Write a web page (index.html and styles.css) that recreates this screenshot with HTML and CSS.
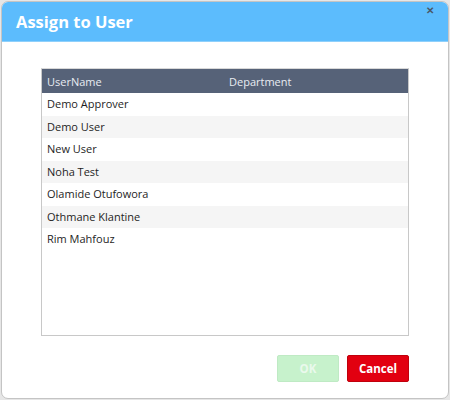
FILE: index.html
```html
<!DOCTYPE html>
<html>
<head>
<meta charset="utf-8">
<link rel="stylesheet" href="styles.css">
</head>
<body>
<div class="dialog">
  <div class="header">
    <span class="title">Assign to User</span>
    <span class="close">&#x2715;</span>
  </div>
  <div class="body">
    <div class="table">
      <div class="thead">
        <div class="c1">UserName</div>
        <div class="c2">Department</div>
      </div>
      <div class="row"><div class="c1">Demo Approver</div><div class="c2"></div></div>
      <div class="row alt"><div class="c1">Demo User</div><div class="c2"></div></div>
      <div class="row"><div class="c1">New User</div><div class="c2"></div></div>
      <div class="row alt"><div class="c1">Noha Test</div><div class="c2"></div></div>
      <div class="row"><div class="c1">Olamide Otufowora</div><div class="c2"></div></div>
      <div class="row alt"><div class="c1">Othmane Klantine</div><div class="c2"></div></div>
      <div class="row"><div class="c1">Rim Mahfouz</div><div class="c2"></div></div>
    </div>
    <div class="actions">
      <button class="btn ok">OK</button>
      <button class="btn cancel">Cancel</button>
    </div>
  </div>
</div>
</body>
</html>
```
FILE: styles.css
```css
html, body {
  margin: 0;
  padding: 0;
  background: #e6e6e6;
  width: 450px;
  height: 400px;
  overflow: hidden;
  font-family: "Open Sans", "Noto Sans", sans-serif;
}
.dialog {
  box-sizing: border-box;
  margin: 1px 1px 0 1px;
  width: 448px;
  height: 398px;
  background: #fff;
  border: 1px solid #c4c4c4;
  border-radius: 7px;
  overflow: hidden;
  display: flex;
  flex-direction: column;
}
.header {
  height: 39px;
  background: #5cbcfd;
  position: relative;
  display: flex;
  align-items: center;
  padding-left: 14px;
  border-bottom: 1px solid #8fd0fb;
}
.title {
  color: #fff;
  font-weight: 700;
  font-size: 16.5px;
  letter-spacing: 0;
}
.close {
  position: absolute;
  right: 14px;
  top: 1px;
  font-size: 10px;
  font-weight: 700;
  color: #4a5868;
}
.body {
  padding: 26px 39px 0 39px;
  display: flex;
  flex-direction: column;
}
.table {
  height: 268px;
  box-sizing: border-box;
  border: 1px solid #c8c8c8;
  border-top-color: #d8d8d8;
  font-size: 11px;
  color: #1e1e1e;
}
.thead {
  display: flex;
  height: 24px;
  align-items: center;
  background: #566278;
  color: #e8ecf2;
}
.row {
  display: flex;
  height: 22.5px;
  align-items: center;
  background: #fff;
  padding-bottom: 1px;
  box-sizing: border-box;
}
.row.alt {
  background: #f5f5f5;
}
.c1 {
  width: 182px;
  padding-left: 5px;
}
.c2 {
  flex: 1;
}
.actions {
  display: flex;
  justify-content: flex-end;
  gap: 8px;
  margin-top: 19px;
}
.btn {
  width: 62px;
  height: 27px;
  border-radius: 2px;
  font-family: "Open Sans", "Noto Sans", sans-serif;
  font-weight: 700;
  font-size: 11.5px;
  color: #fff;
  padding: 0;
}
.ok {
  background: #c7f2cc;
  border: 1px solid #bfeac4;
  color: #eaf9ec;
}
.cancel {
  background: #e20010;
  border: 1px solid #c0000c;
}
```
